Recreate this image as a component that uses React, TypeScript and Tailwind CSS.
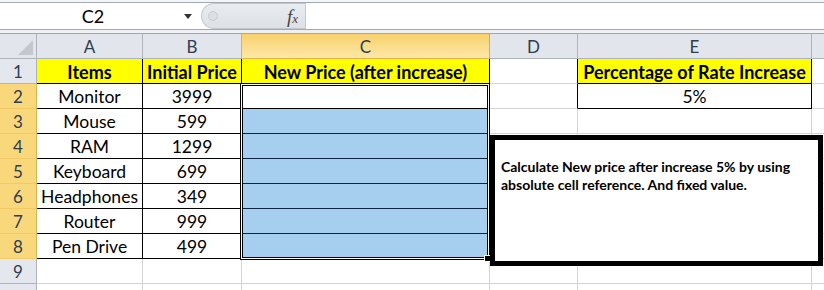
import React from 'react';

const items: [string, string][] = [
  ['Monitor', '3999'],
  ['Mouse', '599'],
  ['RAM', '1299'],
  ['Keyboard', '699'],
  ['Headphones', '349'],
  ['Router', '999'],
  ['Pen Drive', '499'],
];

const grid = 'border-r border-b border-[#d4d4d4]';
const black = 'border-r border-b border-black';

const RowHead = ({ n, active }: { n?: number; active?: boolean }) => (
  <div
    className={`flex items-center justify-center border-r border-b pt-[2px] text-[17px] text-[#2f3d52] ${
      active
        ? 'bg-[#f9d77b] border-r-[#e0b24c] border-b-[#f1c966]'
        : 'bg-[#e4e8ee] border-[#aeb4bc]'
    }`}
  >
    {n}
  </div>
);

const Cell = ({
  className,
  children,
  bold,
}: {
  className: string;
  children?: React.ReactNode;
  bold?: boolean;
}) => (
  <div
    className={`flex items-center justify-center overflow-visible whitespace-nowrap pt-[3px] text-black ${
      bold ? 'text-[18px] font-bold' : 'text-[17.5px]'
    } ${className}`}
  >
    {children}
  </div>
);

const ColHead = ({ label, active }: { label: string; active?: boolean }) => (
  <div
    className={`flex items-center justify-center border-r border-b pt-[2px] text-[17px] text-[#2f3d52] ${
      active
        ? 'bg-gradient-to-b from-[#f8d16c] to-[#fde8a6] border-r-[#e0aa3e] border-b-[#e9b447]'
        : 'bg-[#e2e6ec] border-[#aeb4bc]'
    }`}
  >
    {label}
  </div>
);

export default function App() {
  return (
    <div className="relative h-[290px] w-[824px] overflow-hidden bg-white font-['Lato',sans-serif]">
      {/* Formula bar */}
      <div className="flex h-[34px] flex-col bg-[#eef0f3]">
        <div className="h-[2px] bg-[#f4f5f7]" />
        <div className="flex h-[28px] border-y border-[#a3a9b0] bg-white">
          <div className="relative flex w-[201px] items-center">
            <span className="w-[184px] pl-[2px] text-center text-[18px] text-black">C2</span>
            <span className="h-0 w-0 border-x-[4px] border-t-[5px] border-x-transparent border-t-[#333]" />
          </div>
          <div className="flex w-[104px] items-center justify-between rounded-l-[13px] border border-r-0 border-[#c3c8ce] bg-gradient-to-b from-[#e9ecf0] to-[#dde1e6] pl-[6px] pr-[7px]">
            <span className="h-[10px] w-[10px] rounded-full border border-[#c9cdd2] bg-[#dcdfe3]" />
            <span className="font-['Liberation_Serif',serif] text-[19px] italic leading-none text-[#444]">
              f<span className="text-[13px]">x</span>
            </span>
          </div>
          <div className="flex-1 border-l border-[#c3c8ce] bg-white" />
        </div>
        <div className="h-[4px] border-b border-[#a0a8b2] bg-[#eef0f3]" />
      </div>

      {/* Sheet */}
      <div className="relative">
        <div className="grid grid-cols-[37px_106px_99px_248px_88px_234px_1fr] auto-rows-[25px]">
          {/* Column headers */}
          <div className="relative border-r border-b border-[#aeb4bc] bg-[#e2e6ec]">
            <div className="absolute bottom-[3px] right-[3px] h-0 w-0 border-l-[15px] border-l-transparent [border-bottom:15px_solid_#c3c8cf]" />
          </div>
          <ColHead label="A" />
          <ColHead label="B" />
          <ColHead label="C" active />
          <ColHead label="D" />
          <ColHead label="E" />
          <div className="border-b border-[#aeb4bc] bg-[#e2e6ec]" />

          {/* Row 1 */}
          <RowHead n={1} />
          <Cell className={`${black} bg-[#ffff00]`} bold>Items</Cell>
          <Cell className={`${black} bg-[#ffff00]`} bold>Initial Price</Cell>
          <Cell className={`${black} bg-[#ffff00]`} bold>New Price (after increase)</Cell>
          <Cell className="border-r border-b border-r-black border-b-[#d4d4d4]" />
          <Cell className={`${black} bg-[#ffff00]`} bold>Percentage of Rate Increase</Cell>
          <Cell className="border-b border-[#d4d4d4]" />

          {/* Rows 2-8 */}
          {items.map(([name, price], i) => (
            <React.Fragment key={name}>
              <RowHead n={i + 2} active />
              <Cell className={black}>{name}</Cell>
              <Cell className={black}>{price}</Cell>
              <Cell
                className={
                  i === 0
                    ? black
                    : 'border-r border-b border-r-black border-b-[#0f2642] bg-[#a6cfef]'
                }
              />
              <Cell
                className={
                  i === 0
                    ? 'border-r border-b border-r-black border-b-[#d4d4d4]'
                    : grid
                }
              />
              <Cell className={i === 0 ? black : grid}>{i === 0 ? '5%' : ''}</Cell>
              <Cell className="border-b border-[#d4d4d4]" />
            </React.Fragment>
          ))}

          {/* Row 9 and partial row 10 */}
          {[9, 10].map((n) => (
            <React.Fragment key={n}>
              <RowHead n={n === 9 ? 9 : undefined} />
              <Cell className={grid} />
              <Cell className={grid} />
              <Cell className={grid} />
              <Cell className={grid} />
              <Cell className={grid} />
              <Cell className="border-b border-[#d4d4d4]" />
            </React.Fragment>
          ))}
        </div>

        {/* Selection C2:C8 */}
        <div className="pointer-events-none absolute left-[240px] top-[49px] h-[177px] w-[250px] border border-black">
          <div className="h-full w-full border border-white">
            <div className="h-full w-full border border-black" />
          </div>
        </div>
        <div className="pointer-events-none absolute left-[484px] top-[221px] h-[7px] w-[7px] border border-white bg-black" />

        {/* Text box */}
        <div className="absolute left-[490px] top-[101px] h-[131px] w-[333px] border-[5px] border-black bg-white px-[6px] pt-[18px]">
          <p className="text-[14px] font-bold leading-[18px] text-black">
            Calculate New price after increase 5% by using
            <br />
            absolute cell reference. And fixed value.
          </p>
        </div>
      </div>
    </div>
  );
}
